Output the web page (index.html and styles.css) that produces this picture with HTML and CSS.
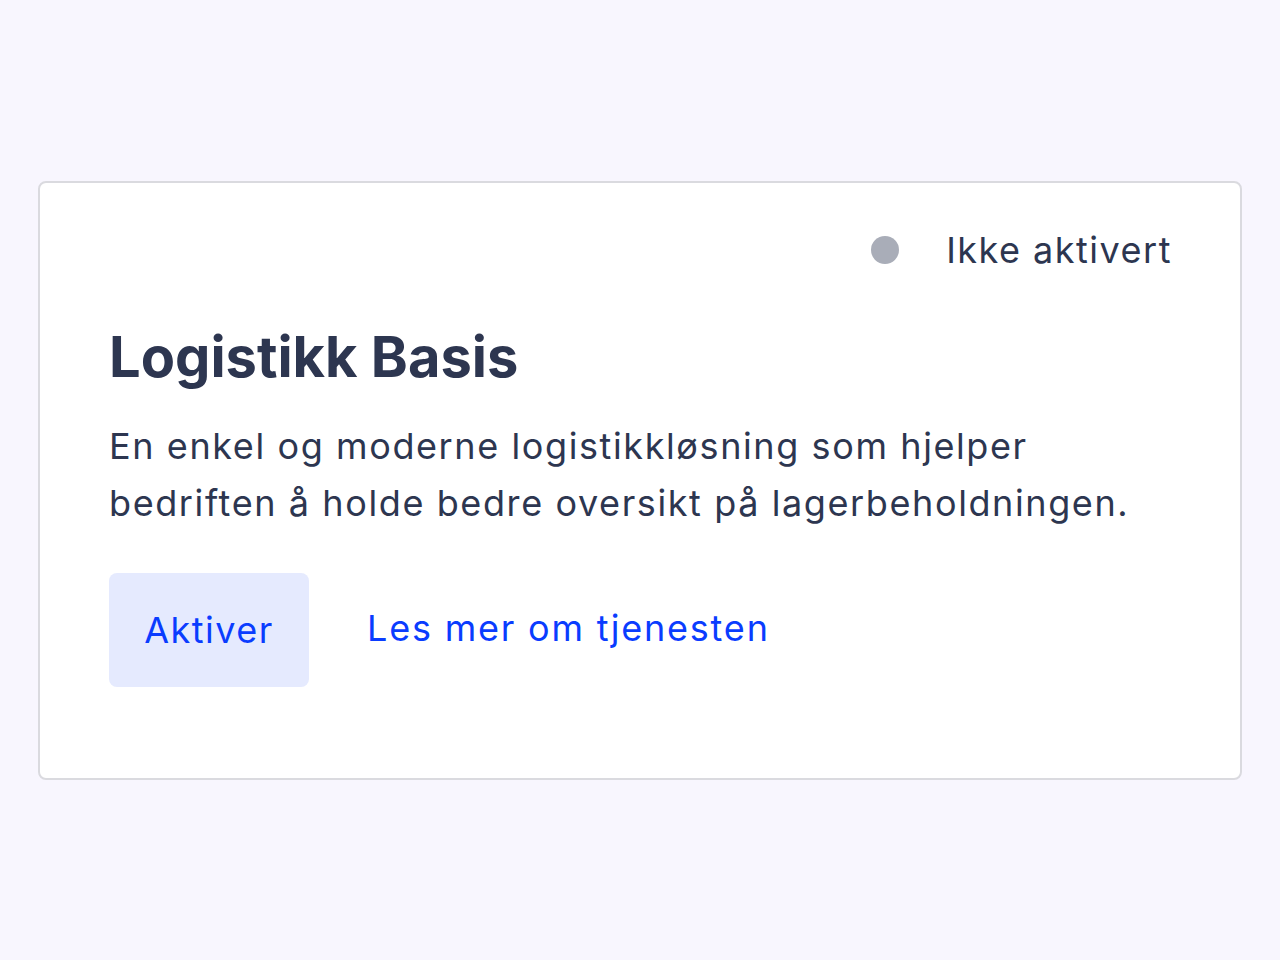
FILE: index.html
```html
<!DOCTYPE html>
<html>
<head>
    <meta charset="utf-8">
    <link rel="stylesheet" href="styles.css">
</head>
<body>
    <div class="card">
        <div class="status">
            <span class="status_dot"></span>
            <span class="status_text">Ikke aktivert</span>
        </div>
        <h1 class="title">Logistikk Basis</h1>
        <p class="description">En enkel og moderne logistikkløsning som hjelper<br>bedriften å holde bedre oversikt på lagerbeholdningen.</p>
        <div class="actions">
            <button class="button">Aktiver</button>
            <a class="link" href="#">Les mer om tjenesten</a>
        </div>
    </div>
</body>
</html>
```

FILE: styles.css
```css
body {
    font-family: 'Inter', 'Noto Sans', sans-serif;
    background-color: #F8F6FE;
    margin: 0;
    color: #2D3650;
}

.card {
    box-sizing: border-box;
    margin: 181px 38px 0 38px;
    height: 599px;
    background-color: white;
    border: 2px solid #DADADF;
    border-radius: 8px;
    padding: 41px 68px 0 69px;
}

.status {
    display: flex;
    justify-content: flex-end;
    align-items: center;
    height: 52px;
}

.status_dot {
    width: 28px;
    height: 28px;
    border-radius: 50%;
    background-color: #A9ADB8;
    margin-right: 47px;
}

.status_text {
    font-size: 36px;
    line-height: 52px;
    letter-spacing: 1.5px;
}

.title {
    font-size: 56px;
    font-weight: 700;
    line-height: 68px;
    margin: 47px 0 0 0;
}

.description {
    font-size: 36px;
    line-height: 57px;
    letter-spacing: 1.6px;
    margin: 27px 0 0 0;
}

.actions {
    display: flex;
    align-items: center;
    margin-top: 41px;
}

.button {
    font-family: inherit;
    background-color: #E5EAFE;
    color: #0A3CFF;
    border: none;
    border-radius: 8px;
    font-size: 36px;
    line-height: 36px;
    letter-spacing: 1.5px;
    width: 200px;
    height: 114px;
    padding: 0;
    cursor: pointer;
}

.link {
    color: #0A3CFF;
    font-size: 36px;
    letter-spacing: 1.8px;
    text-decoration: none;
    margin-left: 58px;
    padding-bottom: 4px;
}
```
